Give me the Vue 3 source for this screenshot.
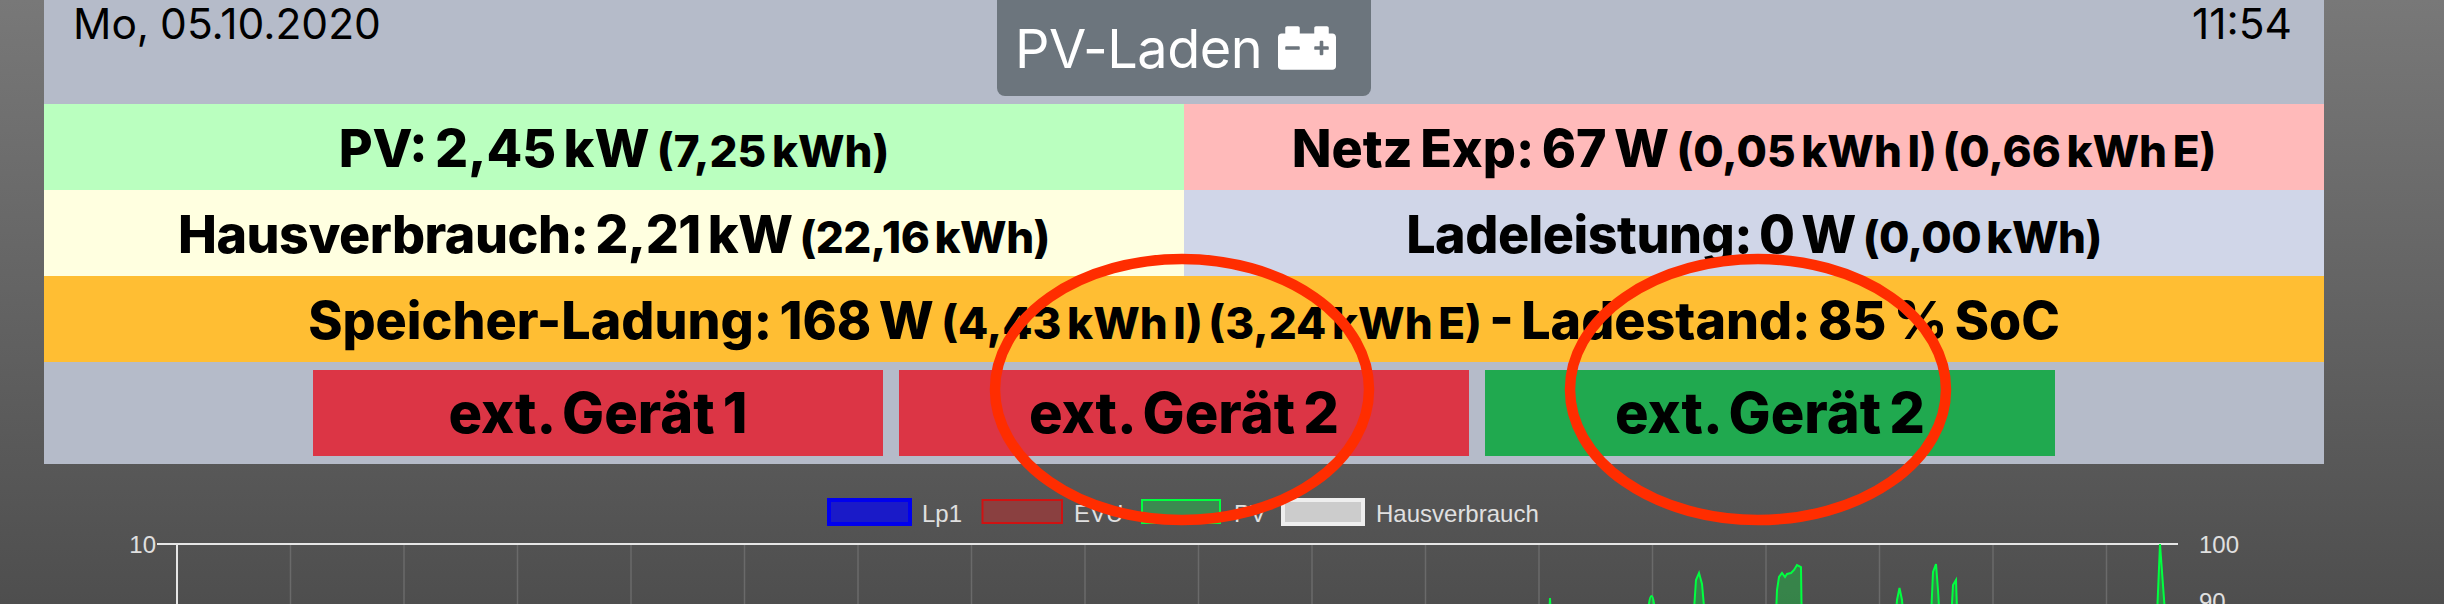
<template>
  <div class="page">
    <div class="panel">
      <div class="head">
        <div class="date">Mo, 05.10.2020</div>
        <div class="badge">
          <span>PV-Laden</span>
          <svg class="batt" viewBox="0 0 512 512">
            <path fill="#fff" d="M480 128h-32V80c0-8.84-7.16-16-16-16h-96c-8.84 0-16 7.16-16 16v48H192V80c0-8.84-7.16-16-16-16H80c-8.84 0-16 7.16-16 16v48H32c-17.67 0-32 14.33-32 32v256c0 17.67 14.33 32 32 32h448c17.67 0 32-14.33 32-32V160c0-17.67-14.33-32-32-32zM192 264c0 4.42-3.58 8-8 8H72c-4.42 0-8-3.58-8-8v-16c0-4.42 3.58-8 8-8h112c4.42 0 8 3.58 8 8v16zm256 0c0 4.42-3.58 8-8 8h-40v40c0 4.42-3.58 8-8 8h-16c-4.42 0-8-3.58-8-8v-40h-40c-4.42 0-8-3.58-8-8v-16c0-4.42 3.58-8 8-8h40v-40c0-4.42 3.58-8 8-8h16c4.42 0 8 3.58 8 8v40h40c4.42 0 8 3.58 8 8v16z"/>
          </svg>
        </div>
        <div class="time">11:54</div>
      </div>
      <div class="grid">
        <div class="cell c-pv">PV: 2,45 kW <small>(7,25 kWh)</small></div>
        <div class="cell c-net">Netz Exp: 67 W <small>(0,05 kWh I) (0,66 kWh E)</small></div>
        <div class="cell c-home">Hausverbrauch: 2,21 kW <small>(22,16 kWh)</small></div>
        <div class="cell c-load">Ladeleistung: 0 W <small>(0,00 kWh)</small></div>
        <div class="cell c-bat wide">Speicher-Ladung: 168 W <small>(4,43 kWh I) (3,24 kWh E)</small> - Ladestand: 85 % SoC</div>
      </div>
      <div class="devices">
        <div class="dev off">ext. Gerät 1</div>
        <div class="dev off">ext. Gerät 2</div>
        <div class="dev on">ext. Gerät 2</div>
      </div>
    </div>

    <svg class="chart" viewBox="0 464 2444 140">
      <line v-for="x in gridX" :key="x" :x1="x" :x2="x" y1="544" y2="604" stroke="#6a6a6a" stroke-width="1.5" />
      <line x1="177" x2="177" y1="544" y2="604" stroke="#e6e6e6" stroke-width="2" />
      <line x1="157" x2="2178" y1="544" y2="544" stroke="#e6e6e6" stroke-width="2" />

      <path v-for="(d, i) in peaks" :key="i" :d="d" fill="rgba(0,255,64,0.3)" stroke="#00ff40" stroke-width="2" />

      <g v-for="item in legend" :key="item.label">
        <rect :x="item.x" :y="item.y" :width="item.w" :height="item.h" :fill="item.fill" :stroke="item.stroke" :stroke-width="item.sw" />
        <text :x="item.tx" y="522" class="lbl">{{ item.label }}</text>
      </g>

      <text x="156" y="553" text-anchor="end" class="lbl">10</text>
      <text x="2199" y="553" class="lbl">100</text>
      <text x="2199" y="610" class="lbl">90</text>
    </svg>

    <svg class="marks" viewBox="0 0 2444 604">
      <ellipse cx="1182" cy="389.5" rx="187" ry="130.5" />
      <ellipse cx="1758" cy="389.5" rx="188" ry="130.5" />
    </svg>
  </div>
</template>

<script setup>
const gridX = Array.from({ length: 17 }, (_, i) => 290.5 + i * 113.5)

const peaks = [
  'M1548 640 L1550 598 L1552 640',
  'M1646 640 C1648 610 1649 596 1651.5 596 C1654 596 1655 610 1657 640',
  'M1692 640 L1696 580 L1699 573 L1702 584 L1707 640',
  'M1775 640 L1777 590 L1779 577 L1782 573 L1785 577 L1787 574 L1791 573 L1794 570 L1797 565 L1801 567 L1802 640',
  'M1894 640 L1897 600 L1899.5 588 L1902 600 L1905 640',
  'M1930 640 L1933 572 L1936 564 L1938 590 L1941 640',
  'M1950 640 L1953 585 L1956 580 L1958 640',
  'M2156 640 L2160 544 L2167 640'
]

const legend = [
  { label: 'Lp1', x: 829, y: 500, w: 81, h: 24, tx: 922, fill: '#1a1ac8', stroke: '#0000ee', sw: 4 },
  { label: 'EVU', x: 982.5, y: 500, w: 79.5, h: 23, tx: 1074, fill: '#8a4040', stroke: '#d01212', sw: 2 },
  { label: 'PV', x: 1142, y: 500, w: 78, h: 23, tx: 1234, fill: '#3b8a50', stroke: '#00ff40', sw: 2 },
  { label: 'Hausverbrauch', x: 1283, y: 500, w: 80, h: 24, tx: 1376, fill: '#cccccc', stroke: '#eeeeee', sw: 4 }
]
</script>

<style>
html, body {
  margin: 0;
  height: 604px;
  overflow: hidden;
  background: linear-gradient(to bottom, #787878, #4e4e4e);
}
</style>

<style scoped>
.page {
  position: relative;
  width: 2444px;
  height: 604px;
  overflow: hidden;
  font-family: Inter, "Liberation Sans", sans-serif;
  color: #000;
}

.panel {
  width: 2280px;
  margin-left: 44px;
  background: #b5bbc9;
}

.head {
  display: grid;
  grid-template-columns: 1fr auto 1fr;
  align-items: start;
  height: 104px;
  padding: 0 32px;
  box-sizing: border-box;
}

.date,
.time {
  font-size: 42.5px;
  line-height: 48px;
}

.date {
  margin-left: -3px;
  word-spacing: -1px;
}

.time {
  text-align: right;
}

.badge {
  display: flex;
  align-items: center;
  gap: 16px;
  width: 374px;
  height: 96px;
  box-sizing: border-box;
  padding-left: 18px;
  background: #6c757d;
  border-radius: 0 0 8px 8px;
  color: #fff;
  font-size: 54px;
  letter-spacing: -0.5px;
}

.batt {
  width: 58px;
  height: 58px;
}

.grid {
  display: grid;
  grid-template-columns: 1fr 1fr;
}

.cell {
  height: 86px;
  box-sizing: border-box;
  padding-top: 3px;
  line-height: 83px;
  text-align: center;
  font-size: 52px;
  font-weight: 800;
  word-spacing: -4px;
  white-space: nowrap;
}

.cell small {
  font-size: 44px;
}

.wide {
  grid-column: 1 / 3;
}

.c-pv { background: #baffbf; }
.c-net { background: #ffbaba; }
.c-home { background: #ffffe0; letter-spacing: -0.5px; }
.c-load { background: #d0d6e8; letter-spacing: -0.5px; }
.c-bat { background: #ffbe33; }

.devices {
  display: flex;
  justify-content: center;
  gap: 16px;
  padding: 8px 0;
}

.dev {
  width: 570px;
  height: 86px;
  display: flex;
  align-items: center;
  justify-content: center;
  font-size: 56px;
  font-weight: 800;
  word-spacing: -4px;
}

.off { background: #dc3545; }
.on { background: #20a94f; }

.chart {
  display: block;
  width: 2444px;
  height: 140px;
}

.lbl {
  font-family: "Liberation Sans", Arial, sans-serif;
  font-size: 24px;
  fill: #e0e0e0;
}

.marks {
  position: absolute;
  left: 0;
  top: 0;
  width: 2444px;
  height: 604px;
  pointer-events: none;
}

.marks ellipse {
  fill: none;
  stroke: #ff2d00;
  stroke-width: 10.5;
}
</style>
